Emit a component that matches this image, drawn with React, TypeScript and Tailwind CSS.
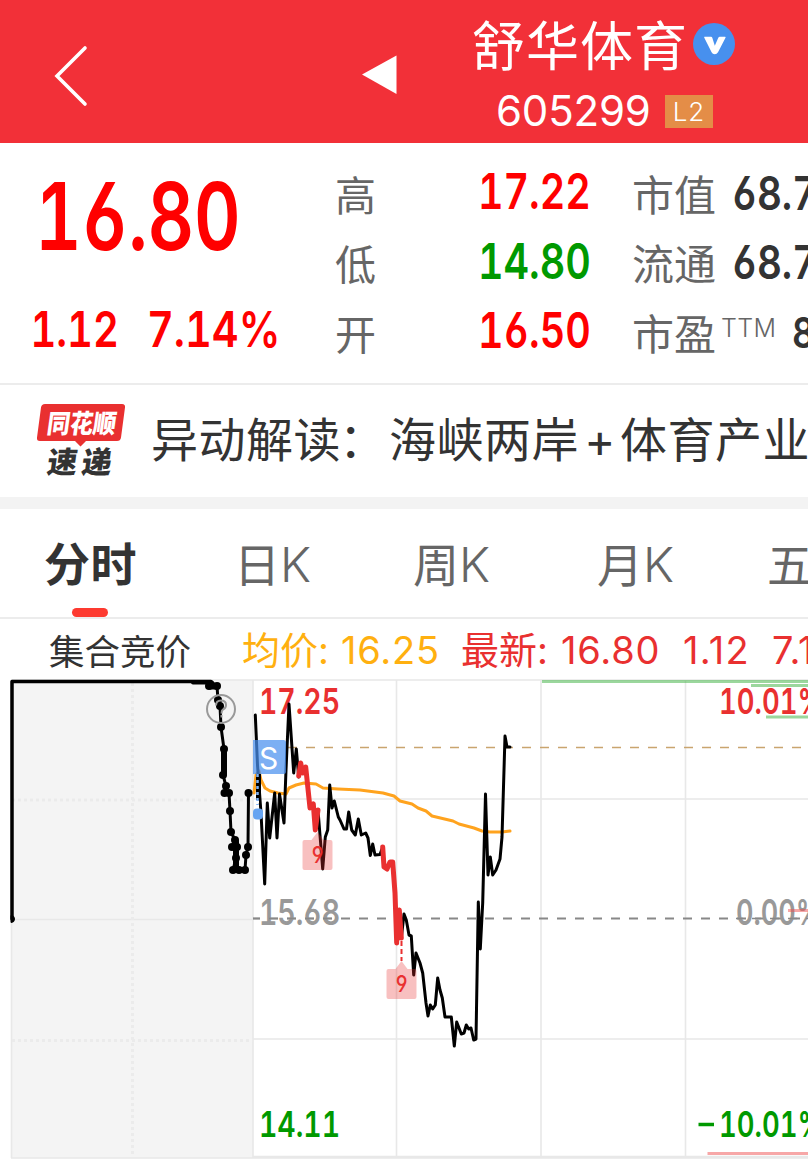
import React from "react";

const auction: [number, number][] = [
  [209, 686], [217, 686], [218, 700], [220, 706], [221, 727], [224, 749], [223, 775], [226, 786],
  [224.5, 793], [229, 793], [230, 811], [231, 832], [235, 840], [232, 847], [237, 847], [236, 858],
  [233, 870], [239, 870], [245, 870], [246, 855], [248, 847], [248.5, 793],
];

const black1 =
  "255.3,715 257.5,765 261,813 264.7,884 267.3,803 269.7,838 274.7,793 277,838 279.5,794 284,823 286,770 289,704 293.7,773 296.3,749 298.7,777";
const red1 = "298.7,776 300.7,763 302.7,773 305.7,767 310,808 313.3,804 315.3,830 318,810";
const black2 =
  "318,810 322.7,869 325.3,837 327.7,830 329.7,785 332,808 334.3,801 338.3,817 340,820 344,829 346.5,829 348.7,812 351.7,830 355.3,835 358.3,819 361.3,835 365.7,833 368,838 370.3,855.5 372.7,844 375,855 380,854.5 382.7,847";
const red2 = "382.7,847 384,867 387,869 390,862 392.7,862 395,893 396.7,943 399.3,910 401.3,938";
const black3 =
  "401.3,938 404,914 406.3,920 409,935 411.3,936 413.7,975 416,953 420,963 422.7,973 426,1003 428,1016 430.3,1005 432.7,1009 435.3,1005 437.7,978 440,990 442.3,998 445,1017 451.3,1017 454.3,1046 456.7,1022 461.3,1034 464,1033 466.3,1025 468.7,1029 471,1028 473.7,1040 476,1039 478.3,902 480.3,949 482.7,903 485.5,794 488,875 490.3,857 492.7,875 496,870 500,859 502,837 504,770 505,736 507,747 510,747";
const average =
  "254,793 256,775 259,771 261,780 265,788 270,791 278,793 286,794 289,788 296,785 304,783 316,784 323,788 338,789 360,790 383,793 394,796 400,801 412,804 418,808 426,811 432,816 453,821 459,824 474,828 482,831 490,832 502,832 510,831";

function Header() {
  return (
    <header className="flex h-[143px] bg-[#f23038] text-white">
      <div className="w-[472px] shrink-0">
        <svg width="472" height="143" fill="none">
          <path d="M85 48 57 76 85 104" stroke="#fff" strokeWidth="3.6" strokeLinecap="round" />
          <path d="M362 74.5 396.5 55.5V94Z" fill="#fff" />
        </svg>
      </div>
      <div className="flex flex-col">
        <div className="flex h-[90px] items-center">
          <h1 className="w-[221px] whitespace-nowrap pt-[3px] text-[53px] leading-[86px] tracking-[1px]">舒华体育</h1>
          <svg width="42" height="42" viewBox="0 0 42 42" className="-mt-[2px]">
            <circle cx="21" cy="21" r="21" fill="#4790ee" />
            <path d="M11.500 13.700h6.500q1 0 1.300 1l2.500 8 3.500-8q.500-1 1.500-1h5.200q1 0 .500 1l-7.500 14.500q-1.200 2-3.200 2-2.300 0-3.200-2l-7.300-14.500q-.400-1 .200-1Z" fill="#fff" />
          </svg>
        </div>
        <div className="flex items-center pl-[24px]">
          <span className="w-[169px] text-[42px] leading-[42px] tracking-[-0.2px]">605299</span>
          <span className="flex h-[33px] w-[48px] items-center justify-center bg-[#e48d47] text-[26px] font-[350] tracking-[1px]">L2</span>
        </div>
      </div>
    </header>
  );
}

function Quote({ label, value, color }: { label: string; value: string; color: string }) {
  return (
    <div className="flex h-[69.5px] items-center">
      <span className="w-[80px] pt-[5px] text-[41px] text-[#666]">{label}</span>
      <span className={"flex w-[176px] justify-end pb-[5px] text-[50px] font-semibold " + color}>
        <span className="origin-right scale-x-[0.79]">{value}</span>
      </span>
    </div>
  );
}

function Summary() {
  return (
    <section className="flex h-[242px] overflow-hidden border-b-2 border-[#ececec] leading-none tabular-nums [font-feature-settings:'cv03','cv04']">
      <div className="w-[335px] shrink-0 font-semibold text-[#f00]">
        <div className="h-[150px] origin-left scale-x-[0.775] pl-[45px] pt-[27px] text-[93px]">16.80</div>
        <div className="flex pt-[11px] text-[50px]">
          <span className="w-[147px] shrink-0 origin-left scale-x-[0.8] pl-[38px]">1.12</span>
          <span className="origin-left scale-x-[0.83]">7.14%</span>
        </div>
      </div>
      <div className="w-[297px] shrink-0 pt-[16px]">
        <Quote label="高" value="17.22" color="text-[#f00]" />
        <Quote label="低" value="14.80" color="text-[#090]" />
        <Quote label="开" value="16.50" color="text-[#f00]" />
      </div>
      <div className="shrink-0 pt-[16px] text-[42px] text-[#666]">
        {["市值", "流通"].map((t) => (
          <div key={t} className="flex h-[69.5px] items-center">
            <span className="w-[100px] pt-[4px]">{t}</span>
            <span className="origin-left scale-x-[0.82] pb-[3px] text-[47px] font-semibold text-[#333]">68.77亿</span>
          </div>
        ))}
        <div className="flex h-[69.5px] items-center">
          <span className="w-[89px] pt-[4px]">市盈</span>
          <span className="-mt-[9px] w-[71px] text-[25px] font-[350] tracking-[0.3px]">TTM</span>
          <span className="origin-left scale-x-[0.82] pb-[1px] text-[43px] font-semibold text-[#333]">88.4</span>
        </div>
      </div>
    </section>
  );
}

function News() {
  return (
    <section className="flex h-[124px] overflow-hidden border-b-[12px] border-[#f3f3f3]">
      <svg width="151" height="112" viewBox="0 385 151 112" className="shrink-0">
        <path d="M45 404H122Q125.500 404 125 407.500L121 437.500Q120.500 441 117 441H86L80.500 446.500 75 441H40Q36.500 441 37 437.500L41 407.500Q41.500 404 45 404Z" fill="#e93030" />
        <g fontFamily="Noto Sans CJK SC" fontWeight="900">
          <text transform="translate(46 432.500) skewX(-8)" fontSize="26" textLength="69" lengthAdjust="spacingAndGlyphs" fill="#fff">同花顺</text>
          <text transform="translate(46 473) skewX(-8)" fontSize="30" fill="#333">速</text>
          <text transform="translate(80.500 473) skewX(-8)" fontSize="30" fill="#333">递</text>
        </g>
      </svg>
      <p className="flex whitespace-nowrap text-[47px] leading-[110px] tracking-[0.5px] text-[#333]">
        <span className="w-[190px] shrink-0">异动解读</span>
        <span className="-ml-[2px] w-[50px] shrink-0">：</span>
        <span className="w-[191px] shrink-0">海峡两岸</span>
        <span className="w-[40px] shrink-0 text-center">+</span>
        <span>体育产业</span>
      </p>
    </section>
  );
}

function Tabs() {
  return (
    <nav className="flex h-[110px] overflow-hidden whitespace-nowrap border-b-2 border-[#ececec] text-[46px] text-[#666]">
      <div className="flex w-[234px] shrink-0 flex-col pl-[44px] font-bold text-[#333]">
        <span className="h-[99px] leading-[111px] tracking-[0.5px]">分时</span>
        <i className="ml-[28px] h-[9px] w-[36px] rounded-full bg-[#fd3a30]" />
      </div>
      <span className="w-[179px] shrink-0 leading-[112px]">日<span className="text-[48px] font-[350]">K</span></span>
      <span className="w-[184px] shrink-0 leading-[112px]">周<span className="text-[48px] font-[350]">K</span></span>
      <span className="w-[170px] shrink-0 leading-[112px]">月<span className="text-[48px] font-[350]">K</span></span>
      <span className="shrink-0 leading-[112px]">五日</span>
    </nav>
  );
}

function Legend() {
  return (
    <div className="flex h-[60px] overflow-hidden whitespace-nowrap text-[38px] leading-[62px] text-[#e93030]">
      <span className="w-[242px] shrink-0 pl-[49px] text-[35.5px] leading-[68px] text-[#333]">集合竞价</span>
      <span className="w-[99px] shrink-0 text-[#ffb010]">均价:</span>
      <span className="w-[120px] shrink-0 tracking-[0.8px] text-[#ffb010]">16.25</span>
      <span className="w-[100px] shrink-0">最新:</span>
      <span className="w-[122px] shrink-0 tracking-[0.8px]">16.80</span>
      <span className="w-[89px] shrink-0 tracking-[1.3px]">1.12</span>
      <span className="shrink-0 tracking-[0.8px]">7.14%</span>
    </div>
  );
}

function Nine({ x, y }: { x: number; y: number }) {
  return (
    <g>
      <path d={`M${x} ${y}l-6 8h-7q-2 0-2 2v26q0 2 2 2h26q2 0 2-2v-26q0-2-2-2h-7z`} fill="#e93030" fillOpacity=".3" />
      <text transform={`translate(${x} ${y + 31}) scale(.86 1)`} fontSize="23" fontWeight="500" textAnchor="middle" fill="#e93030" className="[font-feature-settings:'cv03','cv04']">9</text>
    </g>
  );
}

function Chart() {
  return (
    <svg width="808" height="484" viewBox="0 679 808 484" fill="none" className="block">
      <rect x="11" y="680" width="242" height="478" fill="#f4f4f4" />
      <g stroke="#e8e8e8" strokeWidth="1.6">
        <path d="M11 680H808M253 799H808M253 1039H808M253 1156.500H808M11 1158H808" />
        <path d="M11.500 680V1158M253 680V1158M396.500 680V1158M541 680V1158M685.500 680V1158M12 919.500H253" />
        <path d="M12 800H253M12 1040.500H253M132.500 683V1158" stroke="#ebebeb" strokeWidth="3" strokeDasharray="3 3" />
      </g>
      <path d="M253 918.500H808" stroke="#888" strokeWidth="2" strokeDasharray="9 9" strokeDashoffset="2" />
      <path d="M287 747.500H808" stroke="#c9a56f" strokeWidth="1.700" strokeDasharray="9 9" strokeDashoffset="-1" />

      <g fontSize="36" fontWeight="600" fill="#e93030" className="tabular-nums [font-feature-settings:'cv03','cv04']">
        <text x="259" y="714" textLength="81" lengthAdjust="spacingAndGlyphs">17.25</text>
        <text x="719" y="714" textLength="106" lengthAdjust="spacingAndGlyphs">10.01%</text>
        <text x="259" y="925" textLength="81" lengthAdjust="spacingAndGlyphs" fill="#999">15.68</text>
        <text x="736" y="925" textLength="87" lengthAdjust="spacingAndGlyphs" fill="#999">0.00%</text>
        <text x="259" y="1137" textLength="81" lengthAdjust="spacingAndGlyphs" fill="#090">14.11</text>
        <text x="719" y="1137" textLength="106" lengthAdjust="spacingAndGlyphs" fill="#090">10.01%</text>
        <path d="M698.500 1124.500h15.500" stroke="#090" strokeWidth="3.500" />
      </g>
      <path d="M253 918.500H340M736 918.500H808" stroke="#888" strokeWidth="1.500" strokeDasharray="9 9" strokeDashoffset="2" />
      <g strokeWidth="3" strokeOpacity=".5">
        <path d="M542 681.500H808M751 685.500H808M766 717H808" stroke="#37b03b" />
        <path d="M788 910.500H808M707.500 1153.500H808" stroke="#f05050" />
      </g>

      <polyline points={average} stroke="#ffa31e" strokeWidth="3" strokeLinejoin="round" strokeLinecap="round" />
      <g stroke="#000" strokeWidth="3" strokeLinejoin="round" strokeLinecap="round">
        <path d="M12 919V681.500H211" strokeWidth="3.500" />
        <path d="M193 682.500H212L215 686" strokeWidth="4" />
        <polyline points={auction.map((p) => p.join(",")).join(" ")} />
        <path d="M236 842V868M234.500 870H245M210 686.500H216M224 750V774" strokeWidth="6" />
        <polyline points={black1} />
        <polyline points={black2} />
        <polyline points={black3} />
      </g>
      <g stroke="#e93030" strokeWidth="5" strokeLinejoin="round" strokeLinecap="round">
        <polyline points={red1} />
        <polyline points={red2} />
      </g>
      {auction.map(([x, y], i) => (
        <circle key={i} cx={x} cy={y} r="4" fill="#000" />
      ))}
      <path d="M11 915.500A3.500 3.500 0 0 1 11 922.500Z" fill="#000" stroke="#000" />
      <circle cx="221" cy="709" r="14" stroke="#999" strokeWidth="2" />
      <path d="M216 705.500q0-5 5-5t5 4.500q0 3-3 4.500-1.500 1-1.500 4M221.500 715v2.500" stroke="#999" strokeWidth="2" />

      <path d="M258.500 774V800" stroke="#000" strokeWidth="5" />
      <path d="M257.500 774V808" stroke="#7fb2f5" strokeWidth="2.500" strokeDasharray="3 3" />
      <path d="M257.500 801V808" stroke="#fff" strokeWidth="3" strokeDasharray="2 2" />
      <path d="M253 740H283.500Q286 740 286 742.500V771.500Q286 774 283.500 774H253Z" fill="#4a90ee" fillOpacity=".72" />
      <text x="268.500" y="769" fontSize="30" textAnchor="middle" fill="#fff">S</text>
      <rect x="253" y="808.500" width="10" height="11" rx="4" fill="#67a4f1" />
      <path d="M401.500 941V961" stroke="#fff" strokeWidth="4" />
      <path d="M401.500 941V961" stroke="#e93030" strokeWidth="2" strokeDasharray="5 3" />
      <Nine x={317.5} y={832} />
      <Nine x={401.5} y={961} />
    </svg>
  );
}

export default function App() {
  return (
    <main className="h-[1163px] w-[808px] overflow-hidden bg-white font-['Inter','Noto_Sans_CJK_SC',sans-serif]">
      <Header />
      <Summary />
      <News />
      <Tabs />
      <Legend />
      <Chart />
    </main>
  );
}
